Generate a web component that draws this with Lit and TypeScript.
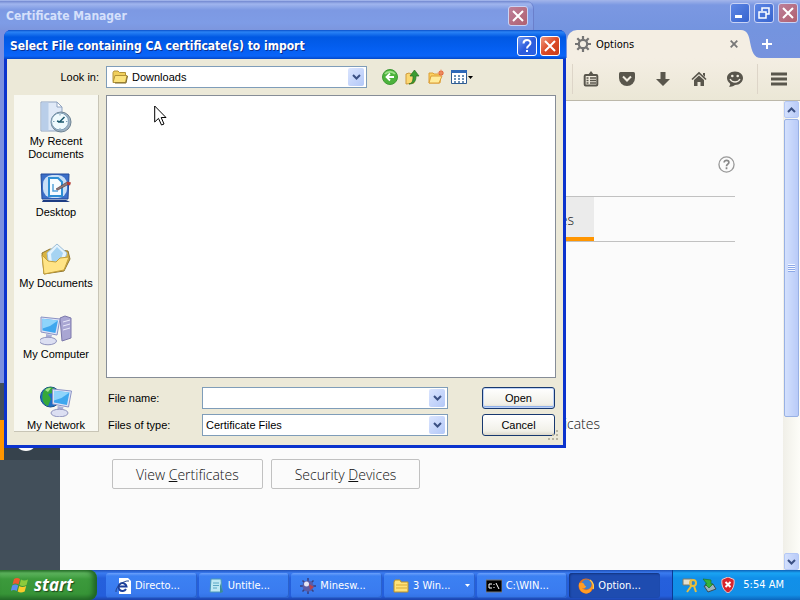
import { LitElement, html, css, svg } from "lit";
import { customElement, property } from "lit/decorators.js";

const chevronDown = html`
  <svg viewBox="0 0 9 6" width="9" height="6">
    <path d="M1 1l3.5 3.5L8 1" fill="none" stroke="#3b5083" stroke-width="2" />
  </svg>
`;

const closeCross = html`
  <svg viewBox="0 0 12 12" width="12" height="12">
    <path d="M1 1l10 10M11 1L1 11" stroke="#fff" stroke-width="2" />
  </svg>
`;

const folder = html`
  <svg viewBox="0 0 16 14" width="16" height="14">
    <path d="M1 2.500l1-1.500h4l1.500 1.500h6v9H1z" fill="#f0cf5c" stroke="#b39338" />
    <path d="M1 12.500L3 5.500H15l-1.500 7z" fill="#fbe27c" stroke="#b39338" />
    <path d="M3 13h11l1.500-7" fill="none" stroke="#7d6a2c" />
  </svg>
`;

const monitor = svg`
  <path d="M9 3l19 2-3 16-16-3z" fill="#dfe4f7" stroke="#8a92c4" />
  <path d="M10.500 4.800l15.500 1.700-2.600 12.500-13-2.600z" fill="#3fa7ee" />
  <path d="M10.500 4.800l15.500 1.700-8 5.500-7.500 2.500z" fill="#8fd4fb" />
  <path d="M14 20l6 1-1 4h-5z" fill="#aab0d8" />
  <ellipse cx="16" cy="27" rx="8.500" ry="3.800" fill="#dcdff2" stroke="#8f93bd" />
`;

const placeIcons = {
  recent: svg`
    <path d="M1 1h16l5 5v24H1z" fill="#dfe9f7" stroke="#8fa3c0" />
    <path d="M1.500 1.500h7v28h-7z" fill="#b9cee9" />
    <path d="M17 1v5h5z" fill="#fff" stroke="#8fa3c0" />
    <circle cx="21" cy="21" r="10" fill="#9fb2c2" stroke="#6f8494" />
    <circle cx="20" cy="20.500" r="8.500" fill="#effafd" stroke="#7fa0b8" />
    <path d="M24.500 16l-5 5h4.500M20 21l-3-1" fill="none" stroke="#1d5a6e" stroke-width="1.500" />
    <path d="M20 13v1.500M20 27v1.500M13 20.500h1.500M26 20.500h1.500" stroke="#7fa0b8" />
  `,
  desktop: svg`
    <path d="M1 2h28l-1 25H2z" fill="#3b6fc8" stroke="#224a9a" />
    <rect x="3" y="3" width="24" height="23" rx="9" fill="#c8dff7" />
    <path d="M9 6h9l4 4v14H9z" fill="#f6fcff" stroke="#2f8fd4" stroke-width="2" />
    <path d="M13 12v7h5" fill="none" stroke="#55a3da" stroke-width="1.500" />
    <path d="M16 17l11-7 2 2-11 6z" fill="#8d7a7b" stroke="#533" stroke-width=".6" />
    <path d="M27 9.500l4 1-1 3-3-1z" fill="#b23c36" />
    <path d="M3 28h23l4 2H2z" fill="#1d3c83" />
  `,
  documents: svg`
    <path d="M2 10l8-4 18 2 2 8-6 12-20 3z" fill="#d9b441" stroke="#8d7430" />
    <path d="M7 10L17 1l10 9-4 12-14 2z" fill="#e3f3fd" stroke="#9dbdd6" />
    <path d="M11 11l6-7 6 6-3 9-8 1z" fill="#a5d3f2" />
    <path d="M2 12l6 6 8 1 4-4 9-1-5 13-20 4z" fill="#ffe486" stroke="#c39f3a" />
  `,
  computer: svg`
    <path d="M20 4l5-2 6 2v20l-9 3z" fill="#a9a6d3" stroke="#7c79ab" />
    <path d="M23 8l7-2M23 12l7-2M23 16l7-2" stroke="#e9e9fa" />
    <g transform="translate(-8 0)">${monitor}</g>
  `,
  network: svg`
    <circle cx="10.500" cy="12" r="10" fill="#1d6fc4" stroke="#174c88" />
    <path d="M3 7c3-5 8-6 12-3l-2 4-5 1 3 5-3 7c-4-1-7-6-5-14z" fill="#37a839" />
    <path d="M5 5c2-2 4-2 6-2l-3 4z" fill="#a6e58b" />
    <g transform="translate(3.500 1)">${monitor}</g>
  `,
};

const taskIcons = {
  ie: svg`
    <path d="M4 0h9l3 3v13H4z" fill="#fff" />
    <path d="M4 8.500h7.500A4 4 0 1 0 11 11" fill="none" stroke="#1c3f9c" stroke-width="2" />
    <path d="M1 14C0 9 9 2 14 3" fill="none" stroke="#24458f" />
  `,
  notepad: svg`
    <path d="M3 1h10l1 13H2z" fill="#bfe8f3" stroke="#4b98b8" />
    <path d="M5 5h6M5 7.500h6M5 10h4" stroke="#5aa7c4" />
    <path d="M12 5l3 9-3 1z" fill="#3b8b96" />
  `,
  mines: svg`
    <path d="M8 0v16M0 8h16M2.500 2.500l11 11M13.500 2.500l-11 11" stroke="#3a3f7d" stroke-width="1.500" />
    <circle cx="8" cy="8" r="5.500" fill="#5a5ca8" />
    <circle cx="6.500" cy="6" r="2.500" fill="#e6e6f5" />
    <path d="M9 6l5 3-4 3z" fill="#b8424e" />
  `,
  folder: svg`
    <path d="M1 4l1-2h5l1 2h7v10H1z" fill="#ffe27a" stroke="#b8902a" />
    <path d="M3 7h11M3 10h11" stroke="#d9ab35" />
  `,
  console: svg`
    <path d="M0 2h16v12H0z" fill="#000" stroke="#777" />
    <path d="M6 6H3v4h3M8 6v1M8 9v1M10 5l3 6" fill="none" stroke="#fff" />
  `,
  firefox: svg`
    <circle cx="8" cy="8" r="7.500" fill="#e5701c" />
    <circle cx="8.500" cy="6.500" r="5" fill="#3d7fd0" />
    <path d="M1 5c1 1 2-1 4 0s1 3 3 3c0 2-2 3-4 2 3 4 9 2 10-3 1 6-3 8.500-6 8.500S0 12 1 5z" fill="#ff9d24" />
    <path d="M12 2c3 2 4 6 3 9" fill="none" stroke="#ffce4a" stroke-width="1.500" />
  `,
};

const places = [
  { icon: placeIcons.recent, label: "My Recent Documents" },
  { icon: placeIcons.desktop, label: "Desktop" },
  { icon: placeIcons.documents, label: "My Documents" },
  { icon: placeIcons.computer, label: "My Computer" },
  { icon: placeIcons.network, label: "My Network" },
];

const tasks = [
  { icon: taskIcons.ie, label: "Directo..." },
  { icon: taskIcons.notepad, label: "Untitle..." },
  { icon: taskIcons.mines, label: "Minesw..." },
  { icon: taskIcons.folder, label: "3 Win...", group: true },
  { icon: taskIcons.console, label: "C:\\WIN..." },
  { icon: taskIcons.firefox, label: "Option...", active: true },
];

@customElement("caption-button")
export class CaptionButton extends LitElement {
  @property() kind = "close";
  @property({ type: Boolean, reflect: true }) muted = false;

  static styles = css`
    :host {
      display: block;
    }

    button {
      display: grid;
      place-items: center;
      box-sizing: border-box;
      width: 20px;
      height: 20px;
      padding: 0;
      border: 1px solid #fff;
      border-radius: 3px;
      background: linear-gradient(135deg, #6f98f3, #2c5cdc 50%, #2a62e4);
    }

    .close {
      background: linear-gradient(135deg, #f09a80, #dc4a26 50%, #c93c17);
    }

    :host([muted]) button {
      border-color: #c9d3f5;
      background: linear-gradient(135deg, #5d86e4, #3764cf);
    }

    :host([muted]) .close {
      background: linear-gradient(135deg, #bd7f99, #b0606f);
    }
  `;

  glyph() {
    switch (this.kind) {
      case "minimize":
        return html`<svg viewBox="0 0 12 12" width="12" height="12">
          <path d="M1 8h7v3H1z" fill="#fff" />
        </svg>`;
      case "restore":
        return html`<svg viewBox="0 0 12 12" width="12" height="12">
          <path d="M4 4V1h7v6H8" fill="none" stroke="#fff" stroke-width="1.500" />
          <path d="M1 5h7v6H1z" fill="none" stroke="#fff" stroke-width="1.500" />
        </svg>`;
      case "help":
        return html`<svg viewBox="0 0 12 14" width="12" height="14">
          <path d="M2.500 4.500C2.500 0 9.500 0 9.500 4c0 2.500-3.500 2.500-3.500 5.500" fill="none" stroke="#fff" stroke-width="2" />
          <path d="M5 11h2v2H5z" fill="#fff" />
        </svg>`;
      default:
        return closeCross;
    }
  }

  render() {
    return html`<button class=${this.kind} aria-label=${this.kind}>${this.glyph()}</button>`;
  }
}

@customElement("browser-window")
export class BrowserWindow extends LitElement {
  static styles = css`
    :host {
      display: flex;
      flex-direction: column;
      height: 100%;
      background: #fbfbfb;
      font-family: "DejaVu Sans Condensed", "DejaVu Sans", sans-serif;
    }

    button {
      font: inherit;
      padding: 0;
      border: 0;
      background: none;
    }

    .chrome {
      background: linear-gradient(#a3b5ea, #7b98e2 5px, #7494df 30px, #7b90dc);
    }

    .caption {
      display: flex;
      justify-content: flex-end;
      gap: 4px;
      box-sizing: border-box;
      height: 30px;
      padding: 3px 2px 0 0;
    }

    .tabs {
      display: flex;
      justify-content: flex-end;
      height: 28px;
      padding-right: 27px;
    }

    .tab {
      display: flex;
      align-items: center;
      gap: 5px;
      box-sizing: border-box;
      width: 174px;
      padding: 0 3px 0 8px;
      border-radius: 10px 0 0 0;
      background: #f4eee3;
      font-size: 11px;
    }

    .tab span {
      flex: 1;
    }

    .tail {
      fill: #f4eee3;
    }

    .add {
      width: 12px;
    }

    .toolbar {
      display: flex;
      justify-content: flex-end;
      align-items: center;
      height: 42px;
      border-bottom: 1px solid #bcb8aa;
      background: linear-gradient(#f4eee3, #ebe7d6);
    }

    .tool {
      display: grid;
      place-items: center;
      width: 36px;
      height: 36px;
    }

    .menu {
      width: 42px;
    }

    .separator {
      width: 1px;
      height: 30px;
      background: #ddd5c8;
    }

    .tool + .separator {
      margin-left: 4px;
    }

    .page {
      display: flex;
      flex: 1;
      min-height: 0;
    }

    .sidebar {
      width: 60px;
      padding-top: 319px;
      box-sizing: border-box;
      background: #424f5a;
    }

    .category {
      display: flex;
      align-items: center;
      height: 40px;
      box-sizing: border-box;
      padding-left: 10px;
      border-left: 4px solid #ff9500;
      background: #36424c;
    }

    .prefs {
      flex: 1;
      padding: 0 48px 0 52px;
      font-family: "Open Sans", "Noto Sans", sans-serif;
      font-size: 14px;
      font-weight: 300;
      color: #111;
    }

    .heading {
      display: flex;
      justify-content: flex-end;
      padding: 55px 0 23px;
    }

    .heading svg {
      display: block;
    }

    .subtabs {
      display: flex;
      height: 44px;
      border-top: 1px solid #c1c1c1;
      border-bottom: 1px solid #c1c1c1;
    }

    .subtab {
      width: 482px;
      padding: 4px 20px 0 0;
      border-bottom: 4px solid #ff9500;
      background: #ebebeb;
      text-align: right;
      color: inherit;
    }

    .option {
      display: flex;
      align-items: center;
      width: 488px;
      height: 20px;
      padding-top: 171px;
      justify-content: flex-end;
    }

    .actions {
      display: flex;
      gap: 8px;
      padding-top: 26px;
    }

    .actions button {
      box-sizing: border-box;
      height: 30px;
      padding: 0 23px;
      border: 1px solid #c1c1c1;
      border-radius: 2px;
      background: #fbfbfb;
      color: inherit;
    }

    .scrollbar {
      display: flex;
      flex-direction: column;
      align-items: center;
      width: 17px;
      background: linear-gradient(90deg, #f0efe8, #fdfdf8);
    }

    .arrow,
    .thumb {
      display: grid;
      place-items: center;
      box-sizing: border-box;
      width: 15px;
      border: 1px solid #b4c8f6;
      border-radius: 2px;
      background: linear-gradient(90deg, #d3e0fd, #b9cbf8);
    }

    .arrow {
      height: 17px;
    }

    .up svg {
      transform: rotate(180deg);
    }

    .thumb {
      flex: 299;
      margin-top: 1px;
      border-color: #98b1e4;
    }

    .track {
      flex: 137;
    }
  `;

  render() {
    return html`
      <header class="chrome">
        <div class="caption">
          <caption-button kind="minimize" muted></caption-button>
          <caption-button kind="restore" muted></caption-button>
          <caption-button kind="close" muted></caption-button>
        </div>
        <div class="tabs">
          <div class="tab">
            <svg viewBox="0 0 16 16" width="16" height="16">
              <path d="M8 0v16M0 8h16M2.300 2.300l11.400 11.400M13.700 2.300L2.300 13.700" stroke="#757575" stroke-width="2.200" />
              <circle cx="8" cy="8" r="4.200" fill="#f4eee3" stroke="#757575" stroke-width="2.200" />
            </svg>
            <span>Options</span>
            <button aria-label="Close tab">
              <svg viewBox="0 0 8 8" width="8" height="8">
                <path d="M.7.7l6.600 6.600M7.300.7L.7 7.300" stroke="#777" stroke-width="1.800" />
              </svg>
            </button>
          </div>
          <svg class="tail" viewBox="0 0 20 28" width="20" height="28">
            <path d="M0 0C6 0 8 5 9 12C11 22 13 28 20 28H0z" />
          </svg>
          <button class="add" aria-label="New tab">
            <svg viewBox="0 0 12 12" width="12" height="12">
              <path d="M6 1v10M1 6h10" stroke="#fff" stroke-width="2" />
            </svg>
          </button>
        </div>
        <nav class="toolbar">
          <span class="separator"></span>
          <button class="tool" aria-label="Bookmarks">
            <svg viewBox="0 0 16 16" width="16" height="16">
              <rect x="1.700" y="4" width="12.600" height="10.500" rx="1" fill="none" stroke="#59564c" stroke-width="2" />
              <path d="M5 4l3-4 3 4z" fill="#59564c" />
              <path d="M3.500 7h2M7 7h6M3.500 9.500h2M7 9.500h6M3.500 12h2M7 12h6" stroke="#59564c" stroke-width="1.300" />
            </svg>
          </button>
          <button class="tool" aria-label="Pocket">
            <svg viewBox="0 0 16 16" width="16" height="16">
              <path d="M1.500 1h13q1.500 0 1.500 1.500V7A8 8 0 0 1 0 7V2.500Q0 1 1.500 1z" fill="#59564c" />
              <path d="M4 5.500l4 4 4-4" fill="none" stroke="#f1ece0" stroke-width="2" />
            </svg>
          </button>
          <button class="tool" aria-label="Downloads">
            <svg viewBox="0 0 16 16" width="16" height="16">
              <path d="M5.500 1h5v7H15l-7 7-7-7h4.500z" fill="#59564c" />
            </svg>
          </button>
          <button class="tool" aria-label="Home">
            <svg viewBox="0 0 16 16" width="16" height="16">
              <path d="M1 8.500L8 2l7 6.500" fill="none" stroke="#59564c" stroke-width="1.700" />
              <path d="M12 2h2v4l-2-2zM3 9l5-4.500L13 9v6H9.500v-4h-3v4H3z" fill="#59564c" />
            </svg>
          </button>
          <button class="tool" aria-label="Hello">
            <svg viewBox="0 0 16 16" width="16" height="16">
              <path d="M8 .5c5 0 8 3 8 6.500s-3 7-8 7c-2 1.500-4 2-6 1.500 1-1 1.500-2 1-3C1 11 0 9 0 7 0 3.500 3 .5 8 .5z" fill="#59564c" />
              <circle cx="5.300" cy="5" r="1.300" fill="#f1ece0" />
              <circle cx="10.700" cy="5" r="1.300" fill="#f1ece0" />
              <path d="M3 8c2 4 8 4 10 0" fill="none" stroke="#f1ece0" stroke-width="1.300" />
            </svg>
          </button>
          <span class="separator"></span>
          <button class="tool menu" aria-label="Menu">
            <svg viewBox="0 0 16 14" width="16" height="14">
              <path d="M0 2h16M0 7h16M0 12h16" stroke="#59564c" stroke-width="3" />
            </svg>
          </button>
        </nav>
      </header>
      <div class="page">
        <aside class="sidebar">
          <div class="category">
            <svg viewBox="0 0 24 24" width="24" height="24">
              <circle cx="12" cy="12" r="11" fill="#fbfbfb" />
            </svg>
          </div>
        </aside>
        <main class="prefs">
          <div class="heading">
            <svg viewBox="0 0 18 18" width="17" height="17">
              <circle cx="9" cy="9" r="8" fill="none" stroke="#999" stroke-width="1.400" />
              <path d="M6.500 7C6.500 3.800 11.500 4 11.500 6.800 11.500 8.600 9 8.600 9 10.800M9 12v2" fill="none" stroke="#888" stroke-width="1.800" />
            </svg>
          </div>
          <div class="subtabs"><button class="subtab">Certificates</button></div>
          <div class="option">certificates</div>
          <div class="actions">
            <button>View <u>C</u>ertificates</button>
            <button>Security <u>D</u>evices</button>
          </div>
        </main>
        <div class="scrollbar">
          <span class="arrow up">${chevronDown}</span>
          <span class="thumb">
            <svg viewBox="0 0 7 8" width="7" height="8">
              <path d="M0 .5h7M0 2.500h7M0 4.500h7M0 6.500h7" stroke="#f3f7ff" />
              <path d="M0 1.500h7M0 3.500h7M0 5.500h7M0 7.500h7" stroke="#8ca8e8" />
            </svg>
          </span>
          <span class="track"></span>
          <span class="arrow">${chevronDown}</span>
        </div>
      </div>
    `;
  }
}

@customElement("file-dialog")
export class FileDialog extends LitElement {
  static styles = css`
    :host {
      display: flex;
      flex-direction: column;
      box-sizing: border-box;
      border: 3px solid #0b33cd;
      border-top-width: 0;
      border-radius: 7px 7px 0 0;
      background: #0b33cd;
      font-family: "Liberation Sans", Arial, sans-serif;
      font-size: 11px;
      color: #000;
    }

    .title {
      display: flex;
      align-items: center;
      gap: 3px;
      height: 29px;
      margin: 0 -3px;
      padding: 3px 6px 0;
      box-sizing: border-box;
      border-radius: 7px 7px 0 0;
      background: linear-gradient(#0a4fc9, #2a83f5 2px, #0058e3 7px, #0560f3 20px, #0a64f8 26px, #0347c8);
      color: #fff;
    }

    h1 {
      flex: 1;
      margin: 0;
      font: bold 12px/16px "DejaVu Sans Condensed", "DejaVu Sans", sans-serif;
      text-shadow: 1px 1px #0a2f8f;
    }

    .body {
      display: grid;
      grid-template-columns: 85px 1fr;
      grid-template-rows: 22px 1fr auto;
      gap: 7px;
      flex: 1;
      min-height: 0;
      padding: 7px 7px 9px;
      background: #ece9d8;
    }

    .look {
      grid-column: 1 / -1;
      display: grid;
      grid-template-columns: 85px 261px auto;
      gap: 7px;
      align-items: center;
    }

    .look label {
      text-align: right;
    }

    .combo {
      display: grid;
      grid-template-columns: 1fr 18px;
      align-items: center;
      box-sizing: border-box;
      height: 22px;
      border: 1px solid #7f9db9;
      background: #fff;
    }

    .combo input,
    .combo select {
      grid-area: 1 / 1 / 2 / 3;
      width: 100%;
      height: 20px;
      box-sizing: border-box;
      padding: 0 20px 0 3px;
      border: 0;
      outline: 0;
      background: none;
      font: inherit;
      color: inherit;
      appearance: none;
    }

    .combo .folder {
      grid-area: 1 / 1;
      display: flex;
      padding-left: 5px;
    }

    .combo .folder + select {
      padding-left: 25px;
    }

    .drop {
      grid-area: 1 / 2;
      display: grid;
      place-items: center;
      width: 16px;
      height: 18px;
      border-radius: 2px;
      background: linear-gradient(135deg, #dbe5fe, #b3c8f8);
      pointer-events: none;
    }

    .tools {
      display: flex;
      gap: 7px;
      padding-left: 8px;
    }

    .tools button {
      display: flex;
      align-items: center;
      gap: 1px;
      padding: 0;
      border: 0;
      background: none;
    }

    .places {
      grid-row: 2 / 4;
      display: flex;
      flex-direction: column;
      box-sizing: border-box;
      margin-bottom: 4px;
      padding-top: 6px;
      overflow: hidden;
      border-right: 1px solid #c8c5b6;
      border-bottom: 1px solid #c8c5b6;
      background: #f8f8f1;
    }

    .place {
      display: flex;
      flex-direction: column;
      align-items: center;
      flex: none;
      gap: 2px;
      height: 71px;
      padding: 0 12px;
      border: 0;
      background: none;
      font: 11px/13px "Liberation Sans", Arial, sans-serif;
      color: #000;
    }

    .place span {
      margin: 0 -8px;
    }

    .place:first-child span {
      margin: 0;
    }

    .files {
      border: 1px solid #868d97;
      background: #fff;
    }

    .form {
      display: grid;
      grid-template-columns: 94px 246px 1fr;
      grid-template-rows: 22px 22px;
      gap: 5px 0;
      align-items: center;
      padding: 2px 1px 0 2px;
    }

    .form button {
      justify-self: end;
      box-sizing: border-box;
      width: 73px;
      height: 22px;
      padding: 0;
      border: 1px solid #17386f;
      border-radius: 3px;
      background: linear-gradient(#fff, #f1f0e8 80%, #dcd8cb);
      font: inherit;
      color: inherit;
    }

    .form .default {
      box-shadow: inset 0 0 0 1px #bdd2f7, inset 0 -2px #8fb0ea;
    }

    .grip {
      position: absolute;
      right: 4px;
      bottom: 4px;
    }
  `;

  render() {
    return html`
      <header class="title">
        <h1>Select File containing CA certificate(s) to import</h1>
        <caption-button kind="help"></caption-button>
        <caption-button kind="close"></caption-button>
      </header>
      <div class="body">
        <div class="look">
          <label for="look">Look in:</label>
          <div class="combo">
            <span class="folder">${folder}</span>
            <select id="look"><option>Downloads</option></select>
            <span class="drop">${chevronDown}</span>
          </div>
          <div class="tools">
            <button aria-label="Back">
              <svg viewBox="0 0 16 16" width="16" height="16">
                <circle cx="8" cy="8" r="7.500" fill="#4db33c" stroke="#3f9a36" />
                <path d="M3 5a6 5 0 0 1 10 0" fill="none" stroke="#9be088" stroke-width="2" />
                <path d="M12 8H5M8 4.500L4.500 8 8 11.500" fill="none" stroke="#fff" stroke-width="1.800" />
              </svg>
            </button>
            <button aria-label="Up one level">
              <svg viewBox="0 0 16 16" width="16" height="16">
                <path d="M1 15V5l3-1 2 1h4l-1 9z" fill="#fbd872" stroke="#d09a3a" />
                <path d="M4 15c4-1 4-4 4-8H5l4.500-6L14 7h-3c0 4-1 8-7 8z" fill="#3a9c32" stroke="#256f22" stroke-width=".7" />
              </svg>
            </button>
            <button aria-label="New folder">
              <svg viewBox="0 0 16 16" width="16" height="16">
                <path d="M1 14V4h4l1 1h7l-1 9z" fill="#fbd05f" stroke="#dc9e37" />
                <path d="M1 14l2-7h11l-3 7z" fill="#ffeb9a" stroke="#dc9e37" />
                <circle cx="13" cy="4" r="2.500" fill="#e0603b" />
                <path d="M13 .5v7M9.500 4h6.500" stroke="#f09a6a" />
              </svg>
            </button>
            <button aria-label="Views">
              <svg viewBox="0 0 16 16" width="16" height="16">
                <path d="M.5 1.500h15v13H.5z" fill="#fff" stroke="#2f5c93" />
                <path d="M0 1h16v3H0z" fill="#2e69b8" />
                <path d="M3 7h2M7 7h2M11 7h2M3 10h2M7 10h2M11 10h2M3 13h2M7 13h2M11 13h2" stroke="#3c6d9d" stroke-width="1.500" />
              </svg>
              <svg viewBox="0 0 5 3" width="5" height="3"><path d="M0 0h5L2.500 3z" /></svg>
            </button>
          </div>
        </div>
        <nav class="places">
          ${places.map(
            (place) => html`
              <button class="place">
                <svg viewBox="0 0 32 32" width="32" height="32">${place.icon}</svg>
                <span>${place.label}</span>
              </button>
            `
          )}
        </nav>
        <div class="files"></div>
        <form class="form">
          <label for="name">File name:</label>
          <div class="combo">
            <input id="name" type="text" />
            <span class="drop">${chevronDown}</span>
          </div>
          <button type="button" class="default">Open</button>
          <label for="type">Files of type:</label>
          <div class="combo">
            <select id="type"><option>Certificate Files</option></select>
            <span class="drop">${chevronDown}</span>
          </div>
          <button type="button">Cancel</button>
        </form>
      </div>
      <svg class="grip" viewBox="0 0 12 12" width="12" height="12">
        <path d="M9 1h2v2H9zM5 5h2v2H5zM9 5h2v2H9zM1 9h2v2H1zM5 9h2v2H5zM9 9h2v2H9z" fill="#b8b4a2" />
      </svg>
    `;
  }
}

@customElement("task-bar")
export class TaskBar extends LitElement {
  static styles = css`
    :host {
      display: flex;
      height: 30px;
      background: linear-gradient(#1f50b8, #3b7cf0 3px, #2560dc 8px, #245edb 26px, #1c44ab);
      font: 11px/14px "DejaVu Sans Condensed", "DejaVu Sans", sans-serif;
      color: #fff;
    }

    button {
      display: flex;
      align-items: center;
      border: 0;
      font: inherit;
      color: inherit;
    }

    .start {
      gap: 5px;
      width: 97px;
      padding: 0 0 0 11px;
      border-radius: 0 8px 8px 0;
      background: linear-gradient(#2f7a30, #5fb65f 3px, #3c9a3c 9px, #379437 24px, #27702a);
      box-shadow: inset -4px 0 5px #1f6425;
      font: italic bold 17px/24px "Open Sans", "Noto Sans", sans-serif;
      text-shadow: 1px 1px 1px #1c4a1c;
    }

    .tasks {
      display: flex;
      flex: 1;
      gap: 2px;
      min-width: 0;
      padding: 3px 12px 2px 9px;
    }

    .task {
      flex: 1;
      gap: 4px;
      min-width: 0;
      padding: 0 5px 0 9px;
      border-radius: 3px;
      background: linear-gradient(#6ba0fb, #3c81f3 3px, #3a7bef 20px, #3271e3);
      box-shadow: inset -1px -1px #2b62cc;
      white-space: nowrap;
    }

    .task span {
      flex: 1;
      text-align: left;
    }

    .active {
      background: #1e4cb0;
      box-shadow: inset 1px 1px 2px #12337d;
    }

    .tray {
      display: flex;
      align-items: center;
      gap: 3px;
      box-sizing: border-box;
      width: 128px;
      padding: 0 16px 0 9px;
      border-left: 1px solid #0b3a94;
      background: linear-gradient(#0d62b8, #1aa4f3 3px, #1190e9 8px, #128fe6 25px, #0c66bd);
    }

    time {
      flex: 1;
      text-align: right;
    }
  `;

  render() {
    return html`
      <button class="start">
        <svg viewBox="0 0 18 18" width="18" height="18">
          <path d="M3 3q3-2 6 0L7.500 8.500q-3-2-6 0z" fill="#ee5a2e" />
          <path d="M10 3.500q3 2 7 0L15.500 9q-4 2-7 0z" fill="#8ccb3c" />
          <path d="M1.200 9.500q3-2 6 0L5.700 15q-3-2-6 0z" fill="#5b8df0" />
          <path d="M8.200 10q3 2 7 0l-1.500 5.500q-4 2-7 0z" fill="#fbcb2c" />
        </svg>
        start
      </button>
      <nav class="tasks">
        ${tasks.map(
          (task) => html`
            <button class="task ${task.active ? "active" : ""}">
              <svg viewBox="0 0 16 16" width="16" height="16">${task.icon}</svg>
              <span>${task.label}</span>
              ${task.group
                ? html`<svg viewBox="0 0 5 3" width="5" height="3"><path d="M0 0h5L2.500 3z" fill="#fff" /></svg>`
                : ""}
            </button>
          `
        )}
      </nav>
      <div class="tray">
        <svg viewBox="0 0 16 16" width="16" height="16">
          <path d="M1 2h9v6H1z" fill="#e5e0cf" stroke="#7e7a66" />
          <circle cx="11" cy="6" r="3" fill="none" stroke="#e9bd3c" stroke-width="2" />
          <path d="M10 8l-5 7M12 9l2 6" stroke="#e9bd3c" stroke-width="2" />
        </svg>
        <svg viewBox="0 0 16 16" width="16" height="16">
          <path d="M3 9l9-2 3 5-8 3z" fill="#9db4bd" stroke="#3b4c54" />
          <path d="M2 2l8 1v4h2L8 11 4 7h2z" fill="#35b43a" stroke="#1d7424" stroke-width=".7" />
        </svg>
        <svg viewBox="0 0 16 16" width="16" height="16">
          <path d="M8 0l6 2.500C15 9 12 14 8 16 4 14 1 9 2 2.500z" fill="#d8232b" stroke="#f0c9c9" />
          <path d="M5.500 5l5 5M10.500 5l-5 5" stroke="#fff" stroke-width="2" />
        </svg>
        <time>5:54 AM</time>
      </div>
    `;
  }
}

@customElement("app-root")
export class AppRoot extends LitElement {
  static styles = css`
    :host {
      display: grid;
      grid-template-rows: minmax(0, 1fr) 30px;
      height: 100vh;
    }

    .desktop {
      position: relative;
      overflow: hidden;
    }

    .manager {
      position: absolute;
      left: 0;
      top: 1px;
      display: flex;
      align-items: center;
      box-sizing: border-box;
      width: 533px;
      height: 29px;
      padding: 0 5px 0 6px;
      border-radius: 0 8px 0 0;
      background: linear-gradient(#7288d0, #a0b5ee 3px, #7d99e3 9px, #7e9ce6 22px, #7c96de);
      box-shadow: 1px 0 #6a7fcb;
      font: bold 12px/16px "DejaVu Sans Condensed", "DejaVu Sans", sans-serif;
      color: #d5e0fb;
    }

    .manager span {
      flex: 1;
    }

    .edge {
      position: absolute;
      left: 0;
      top: 30px;
      width: 10px;
      height: 353px;
      background: #7b90df;
    }

    file-dialog {
      position: absolute;
      left: 4px;
      top: 30px;
      width: 562px;
      height: 418px;
    }

    .pointer {
      position: absolute;
      left: 154px;
      top: 105px;
    }
  `;

  render() {
    return html`
      <div class="desktop">
        <browser-window></browser-window>
        <div class="edge"></div>
        <div class="manager">
          <span>Certificate Manager</span>
          <caption-button kind="close" muted></caption-button>
        </div>
        <file-dialog></file-dialog>
        <svg class="pointer" viewBox="0 0 13 21" width="13" height="21">
          <path d="M.7 1v16l3.800-3.600L7.500 20l2.500-1-2.800-6.500H12z" fill="#fff" stroke="#000" />
        </svg>
      </div>
      <task-bar></task-bar>
    `;
  }
}
